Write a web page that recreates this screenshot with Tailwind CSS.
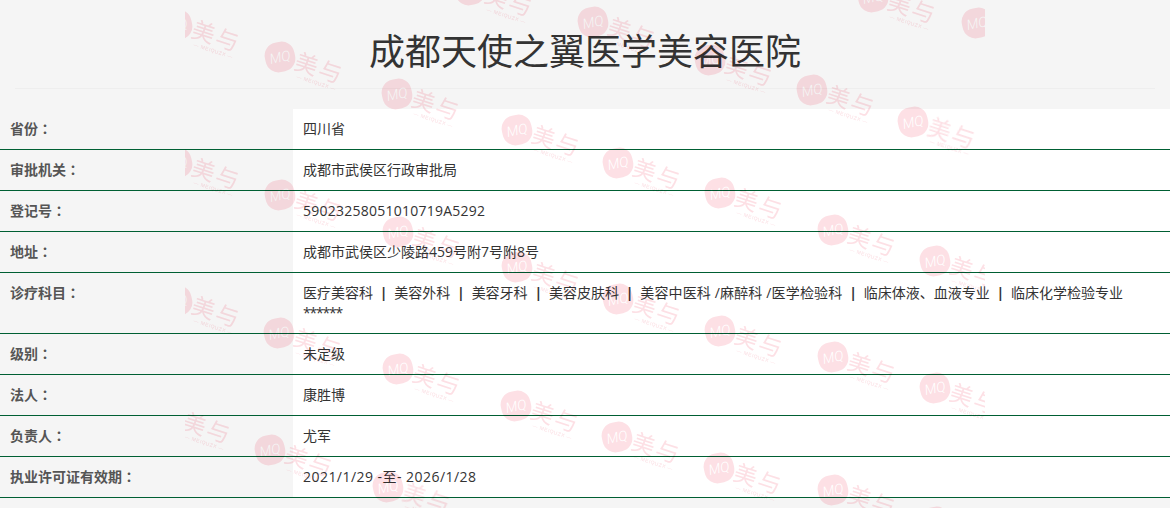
<!DOCTYPE html>
<html lang="zh-CN">
<head>
    <meta charset="UTF-8">
    <title>成都天使之翼医学美容医院</title>
    <script src="https://cdn.jsdelivr.net/npm/@tailwindcss/browser@4"></script>
</head>
<body class="relative h-[508px] overflow-hidden bg-[#f5f5f5] font-['Open_Sans','Noto_Sans_CJK_SC',sans-serif] text-[14px] leading-[20px] text-[#333]">
    <div class="mx-[15px] h-[89px] border-b border-[#eee] pt-[27px] text-center text-[36px] leading-[50px]">成都天使之翼医学美容医院</div>

    <div class="mt-[20px]">
        <div class="grid grid-cols-[293px_1fr] border-b border-[#005f33]">
            <div class="p-[10px] font-bold text-[#555]">省份<span lang="zh-TW" class="font-['Noto_Sans_CJK_TC'] leading-none">：</span></div>
            <div class="bg-white p-[10px]">四川省</div>
        </div>
        <div class="grid grid-cols-[293px_1fr] border-b border-[#005f33]">
            <div class="p-[10px] font-bold text-[#555]">审批机关<span lang="zh-TW" class="font-['Noto_Sans_CJK_TC'] leading-none">：</span></div>
            <div class="bg-white p-[10px]">成都市武侯区行政审批局</div>
        </div>
        <div class="grid grid-cols-[293px_1fr] border-b border-[#005f33]">
            <div class="p-[10px] font-bold text-[#555]">登记号<span lang="zh-TW" class="font-['Noto_Sans_CJK_TC'] leading-none">：</span></div>
            <div class="bg-white p-[10px] tracking-[0.24px]">59023258051010719A5292</div>
        </div>
        <div class="grid grid-cols-[293px_1fr] border-b border-[#005f33]">
            <div class="p-[10px] font-bold text-[#555]">地址<span lang="zh-TW" class="font-['Noto_Sans_CJK_TC'] leading-none">：</span></div>
            <div class="bg-white p-[10px]">成都市武侯区少陵路459号附7号附8号</div>
        </div>
        <div class="grid grid-cols-[293px_1fr] border-b border-[#005f33]">
            <div class="p-[10px] font-bold text-[#555]">诊疗科目<span lang="zh-TW" class="font-['Noto_Sans_CJK_TC'] leading-none">：</span></div>
            <div class="bg-white p-[10px]">
                <div class="whitespace-nowrap">医疗美容科<b class="mx-[6.8px]">|</b>美容外科<b class="mx-[6.8px]">|</b>美容牙科<b class="mx-[6.8px]">|</b>美容皮肤科<b class="mx-[6.8px]">|</b><span class="tracking-[0.15px]">美容中医科 /麻醉科 /医学检验科</span><b class="mx-[6.8px]">|</b>临床体液、血液专业<b class="mx-[6.8px]">|</b>临床化学检验专业</div>
                <div class="tracking-[-1.2px]">******</div>
            </div>
        </div>
        <div class="grid grid-cols-[293px_1fr] border-b border-[#005f33]">
            <div class="p-[10px] font-bold text-[#555]">级别<span lang="zh-TW" class="font-['Noto_Sans_CJK_TC'] leading-none">：</span></div>
            <div class="bg-white p-[10px]">未定级</div>
        </div>
        <div class="grid grid-cols-[293px_1fr] border-b border-[#005f33]">
            <div class="p-[10px] font-bold text-[#555]">法人<span lang="zh-TW" class="font-['Noto_Sans_CJK_TC'] leading-none">：</span></div>
            <div class="bg-white p-[10px]">康胜博</div>
        </div>
        <div class="grid grid-cols-[293px_1fr] border-b border-[#005f33]">
            <div class="p-[10px] font-bold text-[#555]">负责人<span lang="zh-TW" class="font-['Noto_Sans_CJK_TC'] leading-none">：</span></div>
            <div class="bg-white p-[10px]">尤军</div>
        </div>
        <div class="grid grid-cols-[293px_1fr] border-b border-[#005f33]">
            <div class="p-[10px] font-bold text-[#555]">执业许可证有效期<span lang="zh-TW" class="font-['Noto_Sans_CJK_TC'] leading-none">：</span></div>
            <div class="bg-white p-[10px] tracking-[0.46px]">2021/1/29 -至- 2026/1/28</div>
        </div>
    </div>

    <!-- watermark layer, sits over the page -->
    <div id="marks" class="pointer-events-none absolute inset-y-0 left-[185px] w-[800px] overflow-hidden mix-blend-multiply"></div>

    <script>
        // centres of the round logos, page coordinates
        const marks = [
            [177, 25], [280, 57], [397, 94], [517, 130], [618, 163], [720, 193], [833, 230], [935, 261],
            [177, 163], [280, 195], [398, 232], [517, 267], [618, 299], [720, 331], [833, 357], [935, 388],
            [177, 301], [279, 333], [398, 369], [516, 406], [617, 437], [719, 468], [833, 490], [935, 522],
            [168, 417], [270, 450], [388, 487],
            [470, -10], [593, 22], [710, 60], [812, 90], [913, 122], [873, -3], [977, 23]
        ];
        document.getElementById("marks").innerHTML = marks.map(([x, y]) => `
            <div class="absolute h-0 w-0 rotate-[18deg]" style="left:${x - 185}px;top:${y}px">
                <div class="absolute -left-[15px] -top-[15px] flex h-[30px] w-[30px] -rotate-[30deg] items-center justify-center rounded-[13px] bg-[#fde0e5] font-['Roboto',sans-serif] text-[14px] font-light italic leading-none text-white">MQ</div>
                <div class="absolute left-[16px] -top-[15px] whitespace-nowrap text-[23px] leading-[26px] tracking-[2px] text-[#fde0e5]">美与</div>
                <div class="absolute left-[22px] top-[10px] whitespace-nowrap font-['Liberation_Sans',sans-serif] text-[5px] leading-[6px] tracking-[0.5px] text-[#fbdde2]">— MEIQUZX —</div>
            </div>`).join("");
    </script>
</body>
</html>
